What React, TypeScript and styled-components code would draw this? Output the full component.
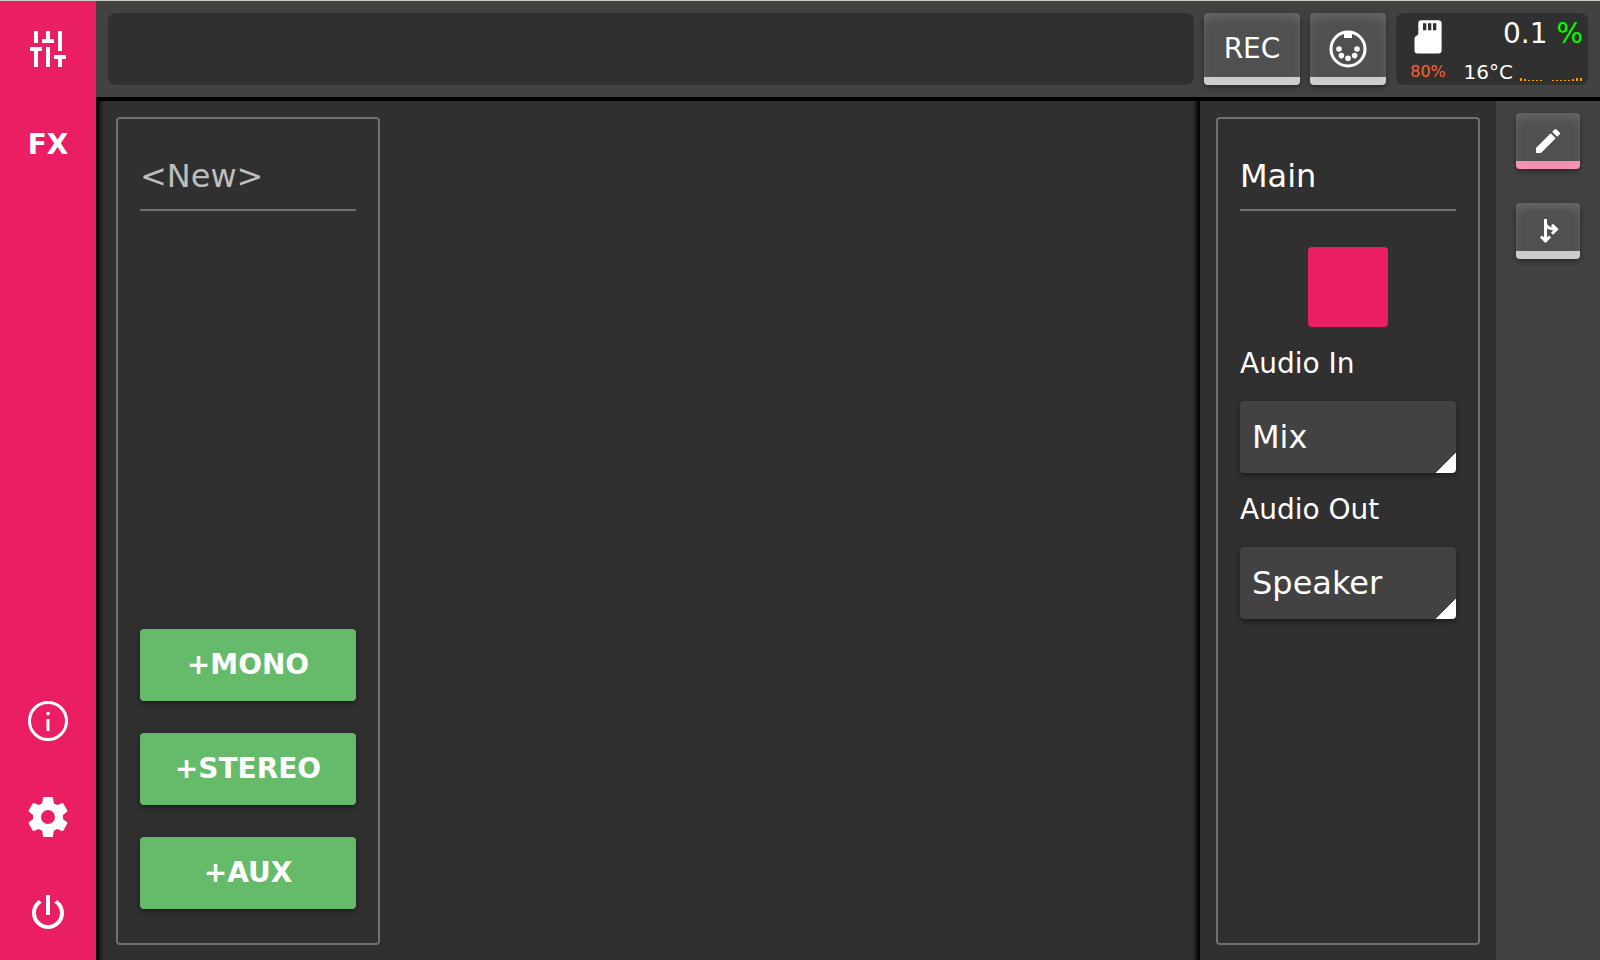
import React from "react";
import styled, { createGlobalStyle } from "styled-components";

const GlobalStyle = createGlobalStyle`
  *, *::before, *::after { box-sizing: border-box; }
  html, body, #root { height: 100%; margin: 0; }
  body {
    overflow: hidden;
    background: #303030;
    color: #fff;
    font-family: "DejaVu Sans", sans-serif;
    font-size: 28px;
    line-height: 36px;
  }
  button, select, input { font: inherit; color: inherit; border: 0; margin: 0; }
  button { cursor: pointer; padding: 0; }
`;

const elevation =
  "0 2px 4px -1px rgba(0,0,0,.2), 0 4px 5px 0 rgba(0,0,0,.14), 0 1px 10px 0 rgba(0,0,0,.14)";

const Shell = styled.div`
  display: grid;
  grid-template-columns: 96px minmax(0, 1fr);
  border-top: 1px solid #d0d0c8;
  height: calc(100vh + 1px);
`;

const Sidebar = styled.nav`
  display: flex;
  flex-direction: column;
  background: #e91e63;
`;

const SideButton = styled.button`
  display: grid;
  place-items: center;
  height: 96px;
  background: transparent;
  font-weight: 700;
`;

const Spacer = styled.div`
  flex: 1;
`;

const Workspace = styled.div`
  display: flex;
  flex-direction: column;
  min-width: 0;
`;

const TopBar = styled.header`
  display: flex;
  gap: 10px;
  padding: 12px;
  height: 100px;
  background: #424242;
  border-bottom: 4px solid #000;
`;

const Display = styled.div`
  flex: 1;
  background: #303030;
  border-radius: 8px;
`;

const RaisedButton = styled.button<{ $w: number; $h: number; $accent?: string }>`
  display: grid;
  place-items: center;
  width: ${(p) => p.$w}px;
  height: ${(p) => p.$h}px;
  border-radius: 4px;
  background: linear-gradient(0deg, ${(p) => p.$accent ?? "#cccccc"} 8px, #505050 8px);
  box-shadow: inset 0 8px 12px -4px rgba(255,255,255,.12), inset 0 0 12px rgba(255,255,255,.06), ${elevation};
`;

const Status = styled.div`
  display: grid;
  grid-template-columns: 44px 1fr;
  width: 192px;
  padding: 0 5px 0 10px;
  background: #303030;
  border-radius: 8px;
`;

const Storage = styled.div`
  display: flex;
  flex-direction: column;
  align-items: center;
  padding-top: 4px;
  font-size: 16px;
  line-height: 30px;
  color: #ff6033;
`;

const Readings = styled.div`
  display: flex;
  flex-direction: column;
`;

const Load = styled.div`
  height: 48px;
  line-height: 42px;
  text-align: right;
  white-space: nowrap;
`;

const Percent = styled.span`
  color: #00ff00;
`;

const Temperature = styled.div`
  display: flex;
  align-items: flex-end;
  justify-content: flex-end;
  gap: 7px;
  font-size: 20px;
  line-height: 20px;
`;

const Content = styled.div`
  display: grid;
  grid-template-columns: minmax(0, 1fr) 296px 104px;
  flex: 1;
  min-height: 0;
`;

const Channels = styled.main`
  display: flex;
  padding: 16px 20px;
  background:
    linear-gradient(90deg, #000, rgba(0,0,0,.8) 2px, rgba(0,0,0,.3) 5px, transparent 8px),
    linear-gradient(270deg, #000, rgba(0,0,0,.8) 2px, rgba(0,0,0,.3) 5px, transparent 8px);
`;

const Output = styled.section`
  display: flex;
  padding: 16px;
`;

const Strip = styled.section`
  display: flex;
  flex-direction: column;
  width: 264px;
  padding: 22px 22px 34px;
  border: 2px solid #707070;
  border-radius: 4px;
`;

const NameInput = styled.input`
  width: 100%;
  height: 70px;
  padding: 2px 0 0;
  background: transparent;
  border-bottom: 2px solid #707070;
  border-radius: 0;
  outline: 0;
  font-size: 32px;
  &::placeholder { color: #bdbdbd; opacity: 1; }
`;

const AddButtons = styled.div`
  display: flex;
  flex-direction: column;
  gap: 32px;
  margin-top: auto;
`;

const AddButton = styled.button`
  height: 72px;
  border-radius: 4px;
  background: #66bb6a;
  font-weight: 700;
  box-shadow: ${elevation};
`;

const Swatch = styled.button`
  align-self: center;
  width: 80px;
  height: 80px;
  margin: 36px 0 18px;
  border-radius: 4px;
  background: #e91e63;
`;

const Field = styled.label`
  display: flex;
  flex-direction: column;
  gap: 18px;
  margin-bottom: 18px;
  line-height: 38px;
`;

const Select = styled.select`
  appearance: none;
  width: 100%;
  height: 72px;
  padding: 0 12px;
  border-radius: 4px;
  background: linear-gradient(135deg, transparent 50%, #fff 50%) right bottom / 20px 20px no-repeat #424242;
  font-size: 32px;
  box-shadow: ${elevation};
`;

const Tools = styled.aside`
  display: flex;
  flex-direction: column;
  align-items: center;
  gap: 34px;
  padding-top: 12px;
  background: #424242;
`;

function Icon({ size, d }: { size: number; d: string }) {
  return (
    <svg width={size} height={size} viewBox="0 0 24 24" fill="currentColor" aria-hidden="true">
      <path d={d} />
    </svg>
  );
}

const mixer =
  "M5 3H7V9H5ZM3 11H9V13H7V21H5V13H3ZM11 3H13V7H15V9H9V7H11ZM11 11H13V21H11ZM17 3H19V13H17ZM15 15H21V17H19V21H17V17H15Z";
const cog =
  "M12,15.5A3.5,3.5 0 0,1 8.5,12A3.5,3.5 0 0,1 12,8.5A3.5,3.5 0 0,1 15.5,12A3.5,3.5 0 0,1 12,15.5M19.43,12.97C19.47,12.65 19.5,12.33 19.5,12C19.5,11.67 19.47,11.34 19.43,11L21.54,9.37C21.73,9.22 21.78,8.95 21.66,8.73L19.66,5.27C19.54,5.05 19.27,4.96 19.05,5.05L16.56,6.05C16.04,5.66 15.5,5.32 14.87,5.07L14.5,2.42C14.46,2.18 14.25,2 14,2H10C9.75,2 9.54,2.18 9.5,2.42L9.13,5.07C8.5,5.32 7.96,5.66 7.44,6.05L4.95,5.05C4.73,4.96 4.46,5.05 4.34,5.27L2.34,8.73C2.21,8.95 2.27,9.22 2.46,9.37L4.57,11C4.53,11.34 4.5,11.67 4.5,12C4.5,12.33 4.53,12.65 4.57,12.97L2.46,14.63C2.27,14.78 2.21,15.05 2.34,15.27L4.34,18.73C4.46,18.95 4.73,19.03 4.95,18.95L7.44,17.94C7.96,18.34 8.5,18.68 9.13,18.93L9.5,21.58C9.54,21.82 9.75,22 10,22H14C14.25,22 14.46,21.82 14.5,21.58L14.87,18.93C15.5,18.67 16.04,18.34 16.56,17.94L19.05,18.95C19.27,19.03 19.54,18.95 19.66,18.73L21.66,15.27C21.78,15.05 21.73,14.78 21.54,14.63L19.43,12.97Z";
const power =
  "M16.56,5.44L15.11,6.89C16.84,7.94 18,9.83 18,12A6,6 0 0,1 12,18A6,6 0 0,1 6,12C6,9.83 7.16,7.94 8.88,6.88L7.44,5.44C5.36,6.88 4,9.28 4,12A8,8 0 0,0 12,20A8,8 0 0,0 20,12C20,9.28 18.64,6.88 16.56,5.44M13,3H11V13H13";
const pencil =
  "M20.71,7.04C21.1,6.65 21.1,6 20.71,5.63L18.37,3.29C18,2.9 17.35,2.9 16.96,3.29L15.12,5.12L18.87,8.87M3,17.25V21H6.75L17.81,9.93L14.06,6.18L3,17.25Z";

const InfoIcon = () => (
  <svg width="48" height="48" viewBox="0 0 48 48" fill="none" aria-hidden="true">
    <circle cx="24" cy="24" r="18.5" stroke="#fff" strokeWidth="3" />
    <circle cx="24" cy="16.6" r="1.8" fill="#fff" />
    <path d="M22.5 22H25.5V34H22.5Z" fill="#fff" />
  </svg>
);

const MidiIcon = () => (
  <svg width="40" height="40" viewBox="0 0 40 40" fill="#fff" aria-hidden="true">
    <circle cx="20" cy="20" r="17" fill="none" stroke="#fff" strokeWidth="3" />
    <path d="M16 3H24V9H16Z" />
    <circle cx="11" cy="20" r="2.8" />
    <circle cx="29" cy="20" r="2.8" />
    <circle cx="13.4" cy="26.6" r="2.8" />
    <circle cx="26.6" cy="26.6" r="2.8" />
    <circle cx="20" cy="29.2" r="2.8" />
  </svg>
);

const SdIcon = () => (
  <svg width="28" height="40" viewBox="0 0 28 40" aria-hidden="true">
    <path
      fill="#fff"
      fillRule="evenodd"
      d="M7.5 3.3H24.5Q27.600 3.3 27.600 6.3V33.5Q27.600 36.5 24.5 36.5H3.5Q.5 36.5 .5 33.5V21.5Q.5 20 2 19Q4.3 18 4.3 16.5V6.3Q4.3 3.3 7.5 3.3ZM9 6.3V13.3H12.3V6.3ZM14 6.3V13.3H17.3V6.3ZM19 6.3V13.3H22.3V6.3Z"
    />
  </svg>
);

const RouteIcon = () => (
  <svg width="32" height="32" viewBox="0 0 32 32" fill="none" stroke="#fff" strokeWidth="3" aria-hidden="true">
    <path d="M13.5 4V26M9 21.5L13.5 26L18 21.5M13.5 8Q14 14 24.5 14.3M20 9.8L24.5 14.3L20 18.8" />
  </svg>
);

const history = [3, 2, 1, 1, 1, 1, 0, 0, 1, 1, 1, 1, 1, 2, 3, 3];

const Graph = () => (
  <svg width="63" height="21" viewBox="0 0 63 21" fill="#ff9800" aria-hidden="true">
    {history.map((v, i) => (
      <rect key={i} x={i * 4} y={20 - v} width="2" height={v} />
    ))}
  </svg>
);

export default function App() {
  return (
    <Shell>
      <GlobalStyle />
      <Sidebar>
        <SideButton aria-label="Mixer"><Icon size={48} d={mixer} /></SideButton>
        <SideButton>FX</SideButton>
        <Spacer />
        <SideButton aria-label="Info"><InfoIcon /></SideButton>
        <SideButton aria-label="Settings"><Icon size={48} d={cog} /></SideButton>
        <SideButton aria-label="Power"><Icon size={48} d={power} /></SideButton>
      </Sidebar>
      <Workspace>
        <TopBar>
          <Display />
          <RaisedButton $w={96} $h={72}>REC</RaisedButton>
          <RaisedButton $w={76} $h={72} aria-label="MIDI"><MidiIcon /></RaisedButton>
          <Status>
            <Storage><SdIcon />80%</Storage>
            <Readings>
              <Load>0.1 <Percent>%</Percent></Load>
              <Temperature>16°C<Graph /></Temperature>
            </Readings>
          </Status>
        </TopBar>
        <Content>
          <Channels>
            <Strip>
              <NameInput placeholder="<New>" aria-label="Channel name" />
              <AddButtons>
                <AddButton>+MONO</AddButton>
                <AddButton>+STEREO</AddButton>
                <AddButton>+AUX</AddButton>
              </AddButtons>
            </Strip>
          </Channels>
          <Output>
            <Strip>
              <NameInput defaultValue="Main" aria-label="Output name" />
              <Swatch aria-label="Colour" />
              <Field>
                Audio In
                <Select defaultValue="Mix"><option>Mix</option></Select>
              </Field>
              <Field>
                Audio Out
                <Select defaultValue="Speaker"><option>Speaker</option></Select>
              </Field>
            </Strip>
          </Output>
          <Tools>
            <RaisedButton $w={64} $h={56} $accent="#f48fb1" aria-label="Edit"><Icon size={32} d={pencil} /></RaisedButton>
            <RaisedButton $w={64} $h={56} aria-label="Routing"><RouteIcon /></RaisedButton>
          </Tools>
        </Content>
      </Workspace>
    </Shell>
  );
}
